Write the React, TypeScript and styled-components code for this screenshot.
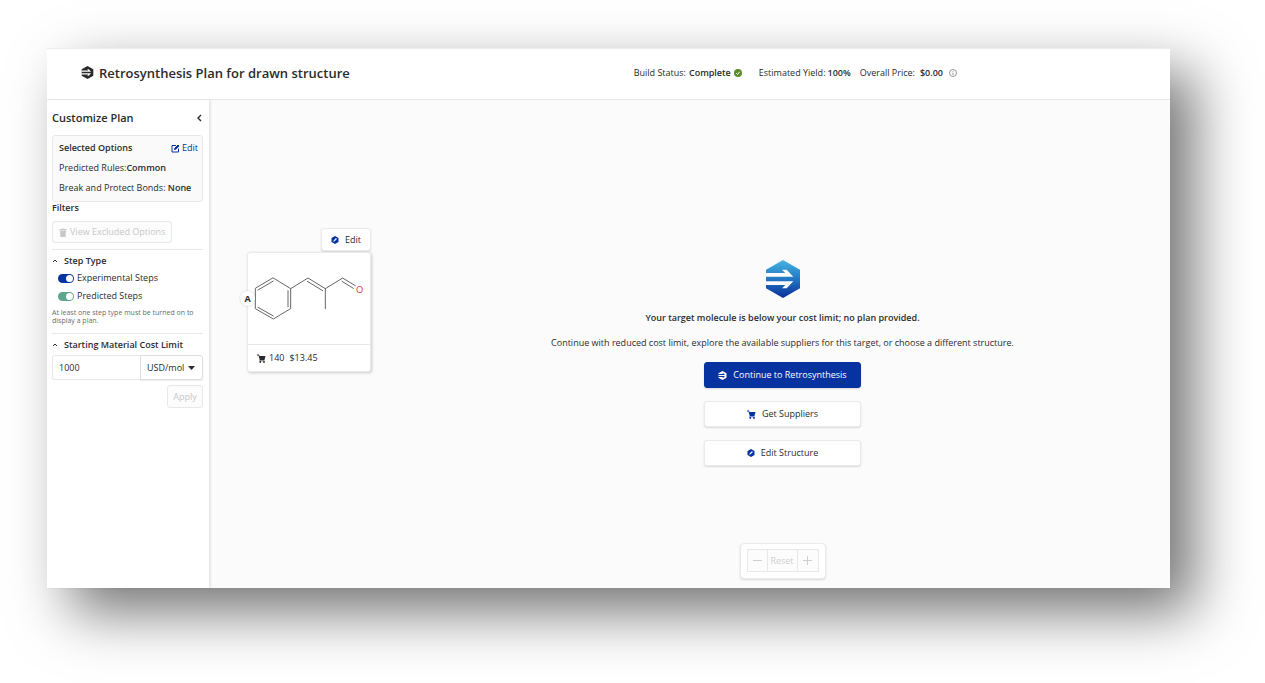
import React, { useState } from "react";
import styled, { createGlobalStyle, css } from "styled-components";

const ink = "#2b2b2b";
const blue = "#06339f";
const line = "#e8e8e8";
const muted = "#c8c8c8";

const GlobalStyle = createGlobalStyle`
  *, *::before, *::after { box-sizing: border-box; }
  body {
    margin: 0;
    background: #fff;
    color: ${ink};
    font: 9px/12px "Open Sans", "Noto Sans", sans-serif;
  }
  button, input, select { font: inherit; color: inherit; margin: 0; }
  h1, h2, h3, p, dl, dd, dt { margin: 0; }
  b { font-weight: 600; }
`;

const Page = styled.div`
  display: flex;
  min-height: 100vh;
  padding: 48px 95px 95px 47px;
`;

const Frame = styled.div`
  display: flex;
  flex: 1;
  flex-direction: column;
  background: #fbfbfb;
  box-shadow: 24px 24px 54px rgba(0, 0, 0, 0.55);
`;

const Header = styled.header`
  display: flex;
  align-items: center;
  justify-content: space-between;
  height: 52px;
  padding: 0 213px 3px 34px;
  background: #fff;
  border-top: 1px solid #ececec;
  border-bottom: 1px solid ${line};
`;

const Title = styled.h1`
  display: flex;
  align-items: center;
  gap: 5px;
  font-size: 13px;
  font-weight: 600;
  line-height: 18px;
`;

const Stats = styled.dl`
  display: flex;
  align-items: center;
`;

const Stat = styled.div<{ $space?: number; $gap?: number }>`
  display: flex;
  align-items: center;
  gap: ${(p) => p.$gap ?? 3}px;
  margin-left: ${(p) => p.$space ?? 0}px;
  white-space: nowrap;

  dd {
    display: flex;
    align-items: center;
    gap: 3px;
    font-weight: 600;
  }
`;

const InfoButton = styled.button`
  display: flex;
  margin-left: 3px;
  padding: 0;
  border: 0;
  background: none;
`;

const Body = styled.div`
  display: flex;
  flex: 1;
`;

const Sidebar = styled.aside`
  width: 163px;
  flex: none;
  padding: 1px 6px 16px 5px;
  background: #fff;
  border-right: 1px solid ${line};
  box-shadow: 1px 0 2px rgba(0, 0, 0, 0.08);
`;

const SidebarHead = styled.div`
  display: flex;
  align-items: center;
  justify-content: space-between;
  height: 34px;
  padding-right: 1px;

  h2 {
    font-size: 11px;
    font-weight: 600;
    line-height: 16px;
  }
`;

const PlainButton = styled.button`
  display: flex;
  align-items: center;
  gap: 2px;
  padding: 0;
  border: 0;
  background: none;
  cursor: pointer;
`;

const EditLink = styled.a`
  display: flex;
  align-items: center;
  gap: 2px;
  color: ${blue};
  text-decoration: none;
`;

const OptionsBox = styled.section`
  display: flex;
  flex-direction: column;
  gap: 2px;
  height: 67px;
  padding: 3px 4px 3px 6px;
  background: #fafafa;
  border: 1px solid ${line};
  border-radius: 3px;
  line-height: 18px;
  white-space: nowrap;
`;

const OptionsHead = styled.div`
  display: flex;
  justify-content: space-between;

  h3 {
    font-size: 9px;
    font-weight: 600;
  }
`;

const FilterTitle = styled.h3`
  margin-bottom: 7px;
  font-size: 9px;
  font-weight: 600;
`;

const disabledLook = css`
  color: ${muted};
  background: #fcfcfc;
  border: 1px solid ${line};
  border-radius: 3px;
`;

const ExcludedButton = styled.button`
  ${disabledLook}
  display: flex;
  align-items: center;
  gap: 3px;
  height: 22px;
  margin-bottom: 6px;
  padding: 0 6px;
  white-space: nowrap;
`;

const Section = styled.section`
  border-top: 1px solid ${line};
  padding-bottom: 8px;
`;

const SectionToggle = styled(PlainButton)`
  gap: 6px;
  height: 20px;
  margin-top: 1px;
  font-weight: 600;
  white-space: nowrap;
`;

const StepList = styled.div`
  display: flex;
  flex-direction: column;
  gap: 6px;
  padding: 1px 0 7px 6px;
`;

const SwitchLabel = styled.label`
  display: flex;
  align-items: center;
  gap: 3px;
`;

const Switch = styled.input<{ $color: string }>`
  appearance: none;
  display: flex;
  align-items: center;
  width: 16px;
  height: 9px;
  padding: 1px;
  border-radius: 5px;
  background: #bbb;

  &::before {
    content: "";
    width: 7px;
    height: 7px;
    border-radius: 50%;
    background: #fff;
  }

  &:checked {
    justify-content: flex-end;
    background: ${(p) => p.$color};
  }
`;

const Hint = styled.p`
  color: #6c6c6c;
  font-size: 7px;
  line-height: 8px;
`;

const CostRow = styled.div`
  display: flex;
  height: 25px;
`;

const CostInput = styled.input`
  flex: 1;
  min-width: 0;
  padding: 0 6px;
  background: #fff;
  border: 1px solid ${line};
  border-right: 0;
  border-radius: 3px 0 0 3px;
`;

const UnitWrap = styled.div`
  display: grid;
  width: 63px;
  align-items: center;
  border: 1px solid #dedede;
  border-radius: 0 3px 3px 0;
  background: #fff;
  box-shadow: 0 1px 1px rgba(0, 0, 0, 0.08);

  > * {
    grid-area: 1 / 1;
  }

  svg {
    justify-self: end;
    margin-right: 7px;
    pointer-events: none;
  }
`;

const UnitSelect = styled.select`
  appearance: none;
  width: 100%;
  height: 100%;
  padding: 0 6px;
  border: 0;
  background: none;
`;

const ApplyButton = styled.button`
  ${disabledLook}
  display: block;
  width: 36px;
  height: 23px;
  margin: 5px 0 0 auto;
  padding: 0;
`;

const Canvas = styled.main`
  display: flex;
  flex: 1;
  min-width: 0;
`;

const Tree = styled.div`
  display: flex;
  flex: none;
  flex-direction: column;
  align-items: flex-end;
  gap: 1px;
  width: 161px;
  padding: 128px 0 16px 37px;
`;

const raised = css`
  background: #fff;
  border: 1px solid #ebebeb;
  border-radius: 3px;
  box-shadow: 0 1px 2px rgba(0, 0, 0, 0.14);
`;

const NodeEdit = styled.button`
  ${raised}
  display: flex;
  align-items: center;
  justify-content: center;
  gap: 6px;
  width: 50px;
  height: 23px;
  padding: 0;
`;

const MoleculeCard = styled.article`
  ${raised}
  position: relative;
  width: 124px;
  box-shadow: 1px 1px 3px rgba(0, 0, 0, 0.2);

  > svg {
    display: block;
  }
`;

const NodeBadge = styled.span`
  position: absolute;
  top: 38px;
  left: -8px;
  width: 15px;
  height: 15px;
  border-radius: 50%;
  background: #fff;
  box-shadow: 0 0 2px rgba(0, 0, 0, 0.2);
  font-weight: 700;
  line-height: 15px;
  text-align: center;
`;

const PriceRow = styled.footer`
  display: flex;
  align-items: center;
  gap: 3px;
  height: 27px;
  padding-left: 9px;
  border-top: 1px solid ${line};

  span + span {
    margin-left: 2px;
  }
`;

const Message = styled.section`
  display: flex;
  flex: 1;
  flex-direction: column;
  align-items: center;
  padding: 160px 0 9px 24px;
  text-align: center;
`;

const Headline = styled.p`
  margin: 14px 0 13px;
  font-weight: 600;
`;

const Actions = styled.div`
  display: flex;
  flex-direction: column;
  gap: 13px;
  margin: 13px 0 24px;
`;

const ActionButton = styled.button<{ $primary?: boolean }>`
  ${raised}
  display: flex;
  align-items: center;
  justify-content: center;
  gap: 6px;
  width: 157px;
  height: 26px;
  padding: 0;
  cursor: pointer;
  ${(p) =>
    p.$primary &&
    css`
      color: #fff;
      background: ${blue};
      border-color: ${blue};
    `}
`;

const ZoomBar = styled.div`
  ${raised}
  display: flex;
  height: 36px;
  margin-top: auto;
  padding: 5px 6px 6px;
  border-radius: 4px;
`;

const ZoomButton = styled.button<{ $wide?: boolean }>`
  display: flex;
  align-items: center;
  justify-content: center;
  width: ${(p) => (p.$wide ? 30 : 21)}px;
  padding: 0;
  color: #cfcfcf;
  background: #fcfcfc;
  border: 1px solid ${line};

  & + & {
    border-left: 0;
  }
`;

const RetroIcon = ({ size, fill = "currentColor", cut = "#fff" }: { size: number; fill?: string; cut?: string }) => (
  <svg width={size} height={size} viewBox="0 0 102 114" aria-hidden="true">
    <defs>
      <linearGradient id="brand" x1="0" y1="0" x2="0" y2="1">
        <stop offset="0" stopColor="#45b5e2" />
        <stop offset="0.5" stopColor="#2277c4" />
        <stop offset="1" stopColor="#0a2f9a" />
      </linearGradient>
    </defs>
    <path d="M51 0 102 29V85L51 114 0 85V29Z" fill={fill} />
    <path d="M-2 39H58L48 29H62L82 50H-2ZM-2 64H82L62 85H48L58 75H-2Z" fill={cut} />
  </svg>
);

const EditHexIcon = () => (
  <svg width="8" height="8" viewBox="0 0 16 16" aria-hidden="true">
    <path d="M8 0 15 4V12L8 16 1 12V4Z" fill={blue} />
    <path d="M4.500 11.500 5.300 8.800 10 4.200 11.800 6 7.200 10.700Z" fill="#fff" />
  </svg>
);

const CartIcon = ({ color }: { color: string }) => (
  <svg width="9" height="9" viewBox="0 0 18 18" fill={color} aria-hidden="true">
    <path d="M0 1H4L5 4H17L15 12H6L6.500 13H15V14.500H5L5.500 12 3 3H0Z" />
    <circle cx="6.500" cy="16" r="1.800" />
    <circle cx="14" cy="16" r="1.800" />
  </svg>
);

const Molecule = () => (
  <svg width="122" height="91" viewBox="36 93 366 273" role="img" aria-label="Molecule structure">
    <g fill="none" stroke="#666" strokeWidth="3" strokeLinecap="round" strokeLinejoin="round">
      <path d="M112 168 164 200V260L112 291 58 260V200Z" />
      <path d="M66 204 112 177M156 206V254M66 256 112 282" />
      <path d="M164 200 216 168 268 200V260M268 200 320 168 358 191" />
      <path d="M214 178 260 206M318 178 352 199" />
    </g>
    <text x="371" y="213" fill="#e8304a" fontFamily="Open Sans, sans-serif" fontSize="28" textAnchor="middle">
      O
    </text>
  </svg>
);

const Chevron = ({ left }: { left?: boolean }) => (
  <svg width="6" height="8" viewBox="0 0 6 8" fill="none" stroke={ink} strokeWidth={left ? 1.4 : 1} aria-hidden="true">
    <path d={left ? "M5 1 2 4 5 7" : "M1 5 3 3 5 5"} />
  </svg>
);

export default function App() {
  const [experimental, setExperimental] = useState(true);
  const [predicted, setPredicted] = useState(true);
  const [cost, setCost] = useState("1000");

  return (
    <Page>
      <GlobalStyle />
      <Frame>
        <Header>
          <Title>
            <RetroIcon size={13} fill={ink} />
            Retrosynthesis Plan for drawn structure
          </Title>
          <Stats>
            <Stat>
              <dt>Build Status:</dt>
              <dd>
                Complete
                <svg width="8" height="8" viewBox="0 0 16 16" aria-hidden="true">
                  <circle cx="8" cy="8" r="8" fill="#5b8c2a" />
                  <path d="M4.500 8.500 7 11 11.500 5.500" fill="none" stroke="#fff" strokeWidth="2" />
                </svg>
              </dd>
            </Stat>
            <Stat $space={17} $gap={2}>
              <dt>Estimated Yield:</dt>
              <dd>100%</dd>
            </Stat>
            <Stat $space={9} $gap={5}>
              <dt>Overall Price:</dt>
              <dd>
                $0.00
                <InfoButton aria-label="Price details">
                  <svg width="8" height="8" viewBox="0 0 16 16" fill="none" stroke="#777" strokeWidth="1.500">
                    <circle cx="8" cy="8" r="7" />
                    <path d="M8 7V12M8 4V5.500" />
                  </svg>
                </InfoButton>
              </dd>
            </Stat>
          </Stats>
        </Header>
        <Body>
          <Sidebar>
            <SidebarHead>
              <h2>Customize Plan</h2>
              <PlainButton aria-label="Collapse panel">
                <Chevron left />
              </PlainButton>
            </SidebarHead>
            <OptionsBox>
              <OptionsHead>
                <h3>Selected Options</h3>
                <EditLink href="#options">
                  <svg width="9" height="9" viewBox="0 0 18 18" fill="none" stroke={blue} strokeWidth="2" aria-hidden="true">
                    <path d="M10 3H2V16H15V9" />
                    <path d="M7 11 8 8 14 2 16 4 10 10Z" fill={blue} />
                  </svg>
                  Edit
                </EditLink>
              </OptionsHead>
              <p>
                Predicted Rules:<b>Common</b>
              </p>
              <p>
                Break and Protect Bonds: <b>None</b>
              </p>
            </OptionsBox>
            <FilterTitle>Filters</FilterTitle>
            <ExcludedButton disabled>
              <svg width="8" height="9" viewBox="0 0 16 18" fill={muted} aria-hidden="true">
                <path d="M1 2H6L7 1H10L11 2H15V5H1ZM2 6H14L13 18H3Z" />
              </svg>
              View Excluded Options
            </ExcludedButton>
            <Section>
              <SectionToggle aria-expanded="true">
                <Chevron />
                Step Type
              </SectionToggle>
              <StepList>
                <SwitchLabel>
                  <Switch
                    type="checkbox"
                    $color={blue}
                    checked={experimental}
                    onChange={(e) => setExperimental(e.target.checked)}
                  />
                  Experimental Steps
                </SwitchLabel>
                <SwitchLabel>
                  <Switch
                    type="checkbox"
                    $color="#5fa58f"
                    checked={predicted}
                    onChange={(e) => setPredicted(e.target.checked)}
                  />
                  Predicted Steps
                </SwitchLabel>
              </StepList>
              <Hint>At least one step type must be turned on to display a plan.</Hint>
            </Section>
            <Section>
              <SectionToggle aria-expanded="true">
                <Chevron />
                Starting Material Cost Limit
              </SectionToggle>
              <CostRow>
                <CostInput aria-label="Cost limit" value={cost} onChange={(e) => setCost(e.target.value)} />
                <UnitWrap>
                  <UnitSelect aria-label="Cost unit">
                    <option>USD/mol</option>
                  </UnitSelect>
                  <svg width="7" height="4" viewBox="0 0 7 4" aria-hidden="true">
                    <path d="M0 0H7L3.500 4Z" fill={ink} />
                  </svg>
                </UnitWrap>
              </CostRow>
              <ApplyButton disabled>Apply</ApplyButton>
            </Section>
          </Sidebar>
          <Canvas>
            <Tree>
              <NodeEdit>
                <EditHexIcon />
                Edit
              </NodeEdit>
              <MoleculeCard>
                <Molecule />
                <NodeBadge>A</NodeBadge>
                <PriceRow>
                  <CartIcon color={ink} />
                  <span>140</span>
                  <span>$13.45</span>
                </PriceRow>
              </MoleculeCard>
            </Tree>
            <Message>
              <RetroIcon size={38} fill="url(#brand)" cut="#fbfbfb" />
              <Headline>Your target molecule is below your cost limit; no plan provided.</Headline>
              <p>
                Continue with reduced cost limit, explore the available suppliers for this target, or choose a different
                structure.
              </p>
              <Actions>
                <ActionButton $primary>
                  <RetroIcon size={9} fill="#fff" cut={blue} />
                  Continue to Retrosynthesis
                </ActionButton>
                <ActionButton>
                  <CartIcon color={blue} />
                  Get Suppliers
                </ActionButton>
                <ActionButton>
                  <EditHexIcon />
                  Edit Structure
                </ActionButton>
              </Actions>
              <ZoomBar>
                <ZoomButton disabled aria-label="Zoom out">
                  <svg width="9" height="9" viewBox="0 0 9 9" stroke="currentColor" aria-hidden="true">
                    <path d="M0 4.500H9" />
                  </svg>
                </ZoomButton>
                <ZoomButton disabled $wide>
                  Reset
                </ZoomButton>
                <ZoomButton disabled aria-label="Zoom in">
                  <svg width="9" height="9" viewBox="0 0 9 9" stroke="currentColor" aria-hidden="true">
                    <path d="M0 4.500H9M4.500 0V9" />
                  </svg>
                </ZoomButton>
              </ZoomBar>
            </Message>
          </Canvas>
        </Body>
      </Frame>
    </Page>
  );
}
